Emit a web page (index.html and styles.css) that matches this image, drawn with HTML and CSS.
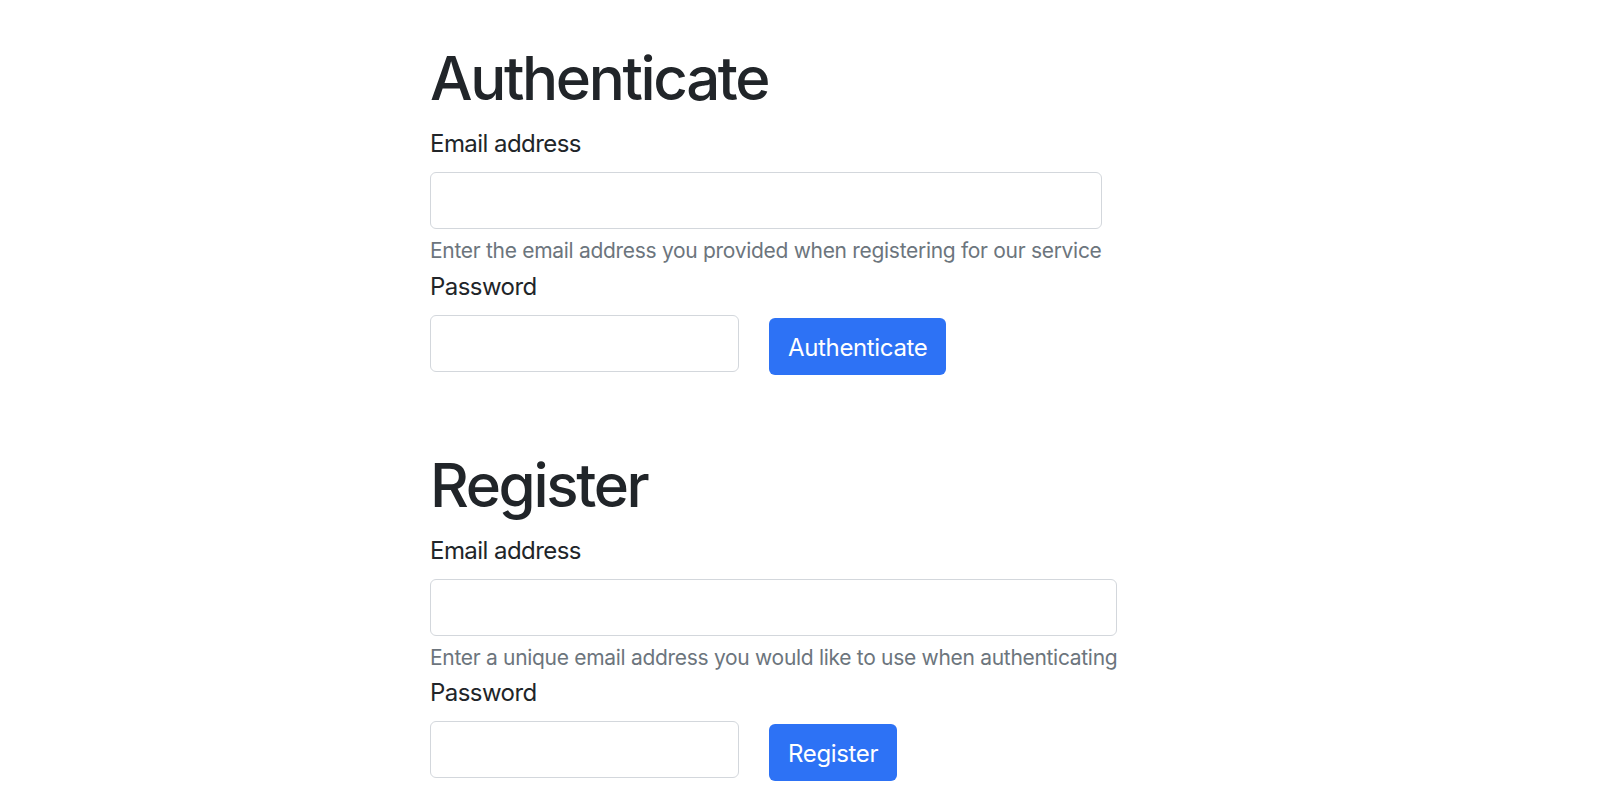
FILE: index.html
```html
<!DOCTYPE html>
<html lang="en">
<head>
<meta charset="utf-8">
<title>Authenticate</title>
<link rel="stylesheet" href="styles.css">
</head>
<body>
<main class="page">
  <section class="panel">
    <h1 class="title">Authenticate</h1>
    <form class="form">
      <label class="label" for="auth-email">Email address</label>
      <input class="field" id="auth-email" type="email">
      <div class="help">Enter the email address you provided when registering for our service</div>
      <label class="label" for="auth-pass">Password</label>
      <div class="row">
        <input class="field field-short" id="auth-pass" type="password">
        <button class="btn" type="button">Authenticate</button>
      </div>
    </form>
  </section>
  <section class="panel">
    <h1 class="title">Register</h1>
    <form class="form">
      <label class="label" for="reg-email">Email address</label>
      <input class="field" id="reg-email" type="email">
      <div class="help">Enter a unique email address you would like to use when authenticating</div>
      <label class="label" for="reg-pass">Password</label>
      <div class="row">
        <input class="field field-short" id="reg-pass" type="password">
        <button class="btn" type="button">Register</button>
      </div>
    </form>
  </section>
</main>
</body>
</html>
```

FILE: styles.css
```css
* { box-sizing: border-box; }

html, body {
  margin: 0;
  background: #ffffff;
}

body {
  font-family: Inter, "Noto Sans", sans-serif;
  color: #212529;
  font-size: 24px;
  line-height: 1.5;
}

.page {
  padding: 42px 0 0 430px;
  display: flex;
  flex-direction: column;
  gap: 74px;
  align-items: flex-start;
}

.panel {
  display: flex;
  flex-direction: column;
  align-items: flex-start;
}

.title {
  margin: 0 0 10px;
  font-size: 60px;
  line-height: 72px;
  font-weight: 500;
  letter-spacing: -2.35px;
}

.form {
  display: flex;
  flex-direction: column;
}

.label {
  display: block;
  padding-top: 2px;
  margin-bottom: 10px;
  line-height: 36px;
  letter-spacing: -0.55px;
}

.field {
  display: block;
  width: 100%;
  height: 57px;
  border: 1px solid #d3d7dc;
  border-radius: 6px;
  background: #fff;
  padding: 9px 18px;
  font: inherit;
  color: inherit;
}

.help {
  margin-top: 6px;
  font-size: 21px;
  line-height: 31.5px;
  color: #6c757d;
  white-space: nowrap;
  letter-spacing: -0.3px;
}

.row {
  display: flex;
  align-items: flex-start;
  gap: 30px;
}

.field-short {
  width: 309px;
  flex: none;
}

.btn {
  margin-top: 3px;
  height: 57px;
  padding: 3px 19px 0;
  border: none;
  border-radius: 6px;
  background: #2d72f5;
  color: #fff;
  font: inherit;
  letter-spacing: -0.35px;
  cursor: pointer;
}
```
